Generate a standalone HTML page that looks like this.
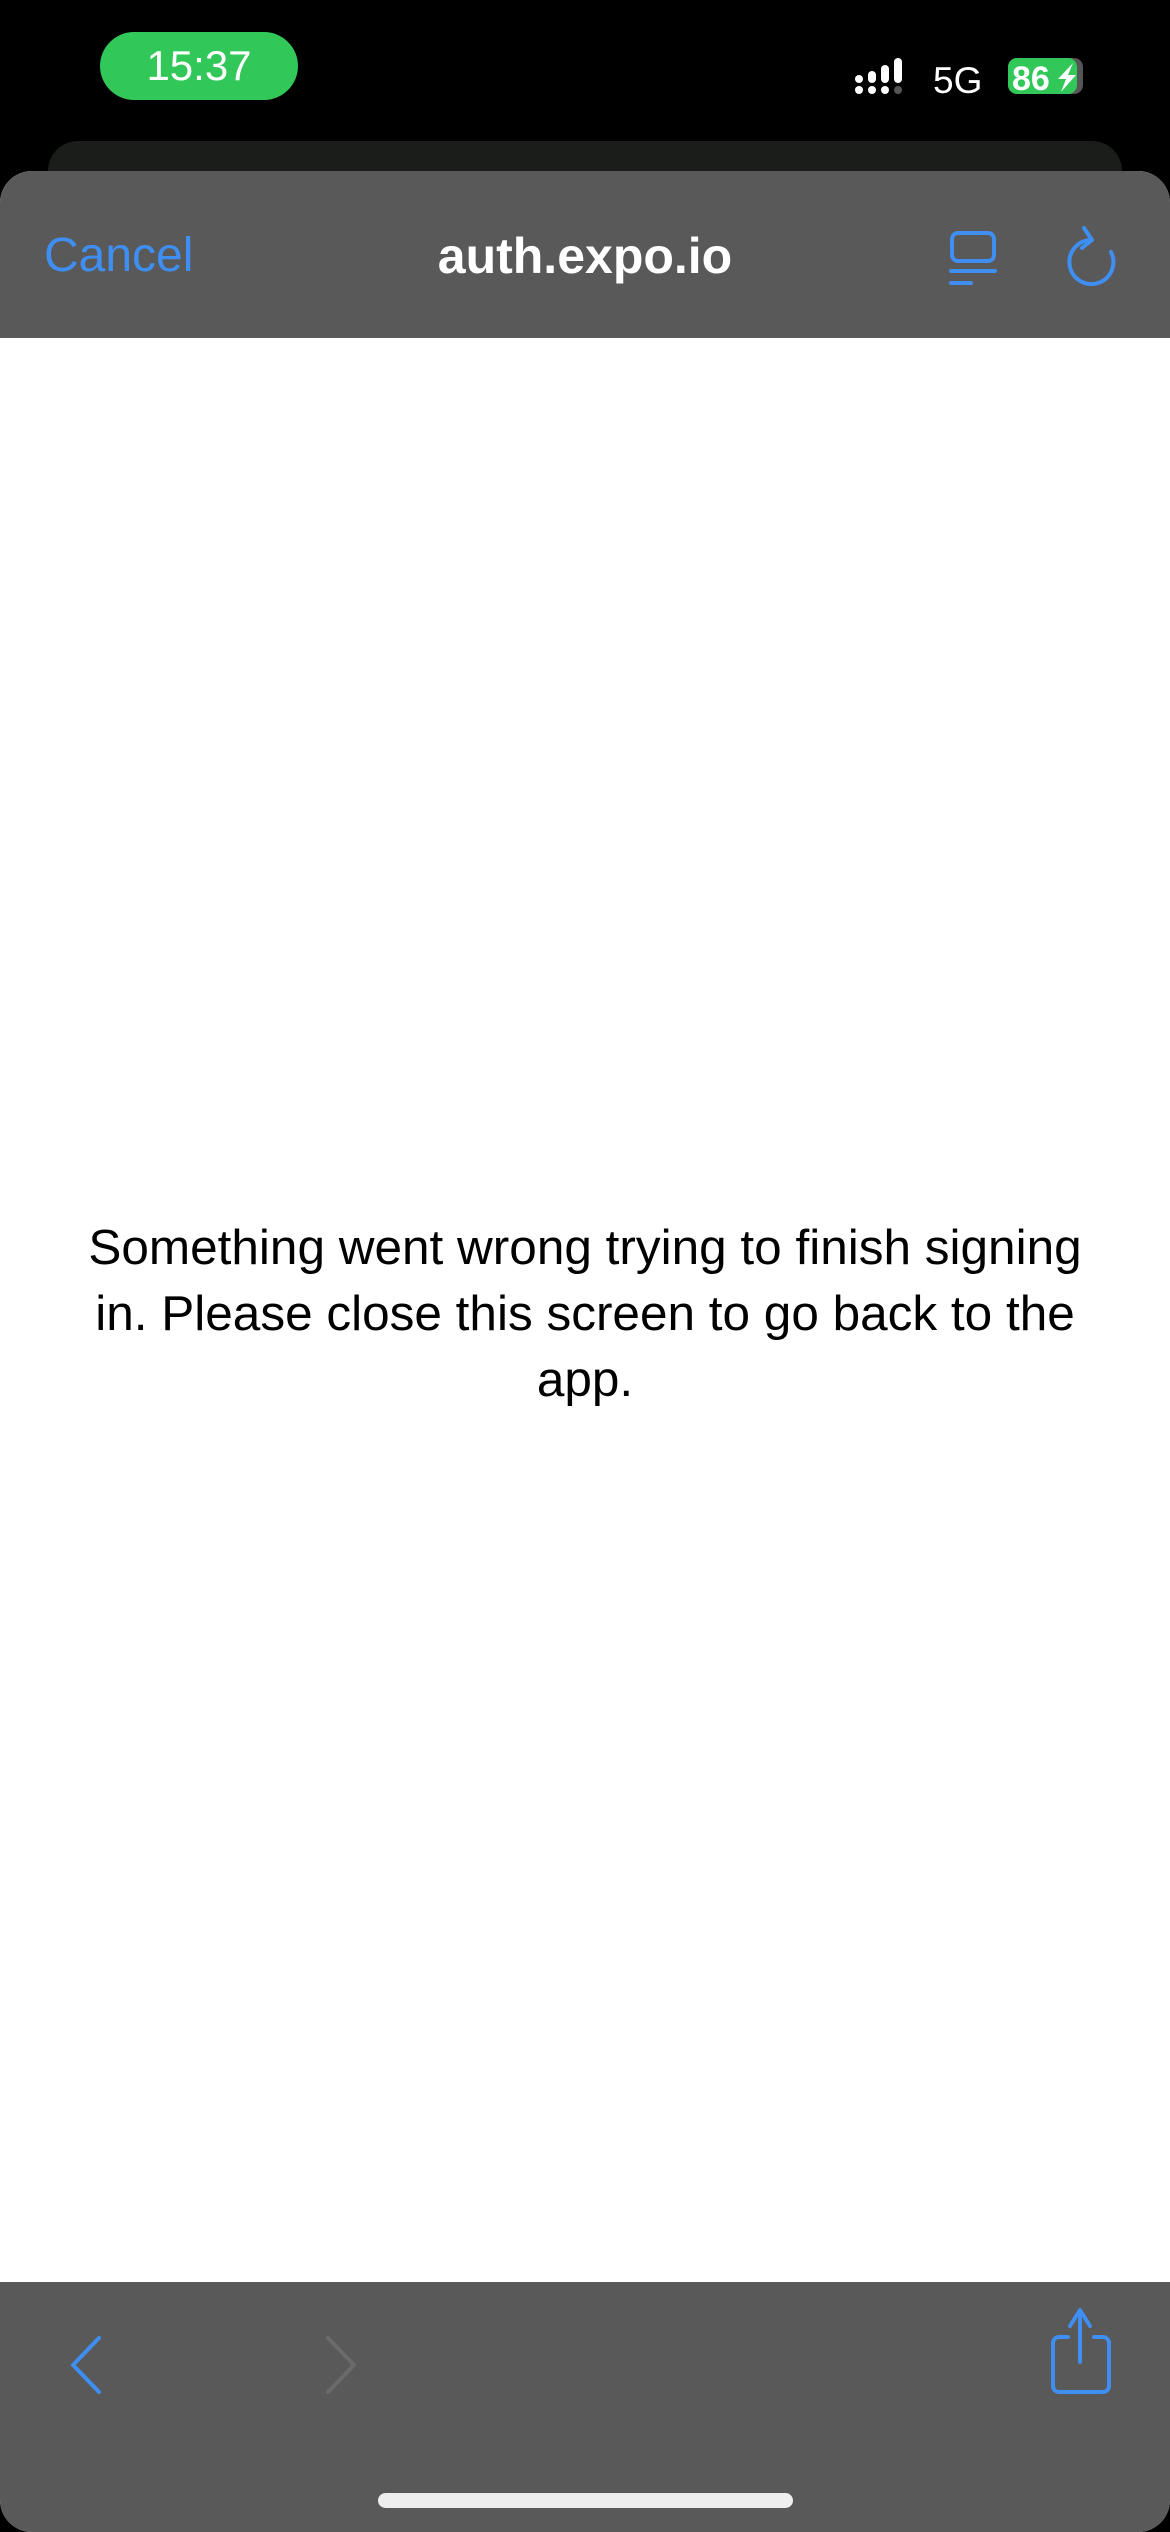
<!DOCTYPE html>
<html><head><meta charset="utf-8"><style>
*{margin:0;padding:0;box-sizing:border-box}
body{width:1170px;height:2532px;background:#000;position:relative;overflow:hidden;font-family:"Liberation Sans",sans-serif}
.pill{position:absolute;left:100px;top:32px;width:198px;height:68px;border-radius:34px;background:#31c859;color:#fff;font-size:42px;text-align:center;line-height:68px}
.card{position:absolute;left:48px;top:141px;width:1074px;height:100px;background:#1b1d1b;border-radius:30px}
.sheet{position:absolute;left:0;top:171px;width:1170px;height:2361px;background:#fff;border-radius:32px;overflow:hidden}
.hdr{position:absolute;left:0;top:0;width:1170px;height:167px;background:#595959}
.cancel{position:absolute;left:44px;top:57px;font-size:48px;color:#3f8ef2}
.title{position:absolute;left:0;width:1170px;text-align:center;top:56px;font-size:50px;color:#fff;font-weight:bold}
.msg{position:absolute;left:80px;width:1010px;top:1044px;text-align:center;font-size:49.5px;line-height:66px;color:#000}
.bot{position:absolute;left:0;top:2111px;width:1170px;height:250px;background:#595959}
.home{position:absolute;left:378px;top:211px;width:415px;height:15px;border-radius:8px;background:#eee}
</style></head><body>
<div class="pill">15:37</div>
<svg style="position:absolute;left:850px;top:55px" width="240" height="45">
<g fill="#fff"><rect x="5" y="20" width="8" height="8" rx="4"/><rect x="5" y="31" width="8" height="8" rx="4"/>
<rect x="18" y="16" width="8" height="12" rx="4"/><rect x="18" y="31" width="8" height="8" rx="4"/>
<rect x="31" y="10" width="8" height="18" rx="4"/><rect x="31" y="31" width="8" height="8" rx="4"/>
<rect x="44" y="3" width="8" height="25" rx="4"/></g><rect x="44" y="31" width="8" height="8" rx="4" fill="#555"/>
<text x="83" y="38" fill="#fff" font-size="37" font-family="Liberation Sans">5G</text>
<rect x="158" y="3" width="75" height="36" rx="9" fill="#555"/><rect x="158" y="3" width="69" height="36" rx="9" fill="#31c859"/>
<text x="162" y="35" fill="#fff" font-size="34" font-weight="bold" font-family="Liberation Sans">86</text>
<path d="M223 8 L208 24 L216 24 L211 37 L226 20 L218 20 Z" fill="#fff"/>
</svg>
<div class="card"></div>
<div class="sheet">
<div class="hdr">
<div class="cancel">Cancel</div>
<div class="title">auth.expo.io</div>
<svg style="position:absolute;left:945px;top:55px" width="180" height="80" fill="none" stroke="#3f8ef2" stroke-width="4" stroke-linecap="round" stroke-linejoin="round">
<rect x="7" y="7" width="42" height="28" rx="6"/><line x1="6" y1="45" x2="50" y2="45"/><line x1="6" y1="57" x2="26" y2="57"/>
<path d="M146 14 A22 22 0 1 0 166 26"/><path d="M139 2 L147 14 L137 22"/>
</svg>
</div>
<div class="msg">Something went wrong trying to finish signing in. Please close this screen to go back to the app.</div>
<div class="bot">
<svg width="1170" height="120" style="position:absolute;left:0;top:0" fill="none" stroke-width="4" stroke-linecap="round" stroke-linejoin="round">
<path d="M99 56 L73 83 L99 110" stroke="#3f8ef2"/>
<path d="M328 56 L354 83 L328 110" stroke="#6a6a6a"/>
<path d="M1068 55 h-9 a6 6 0 0 0 -6 6 v43 a6 6 0 0 0 6 6 h44 a6 6 0 0 0 6 -6 v-43 a6 6 0 0 0 -6 -6 h-9" stroke="#3f8ef2"/>
<path d="M1080 80 V30 M1070 44 L1080 28 L1090 44" stroke="#3f8ef2"/>
</svg>
<div class="home"></div>
</div>
</div>
</body></html>
